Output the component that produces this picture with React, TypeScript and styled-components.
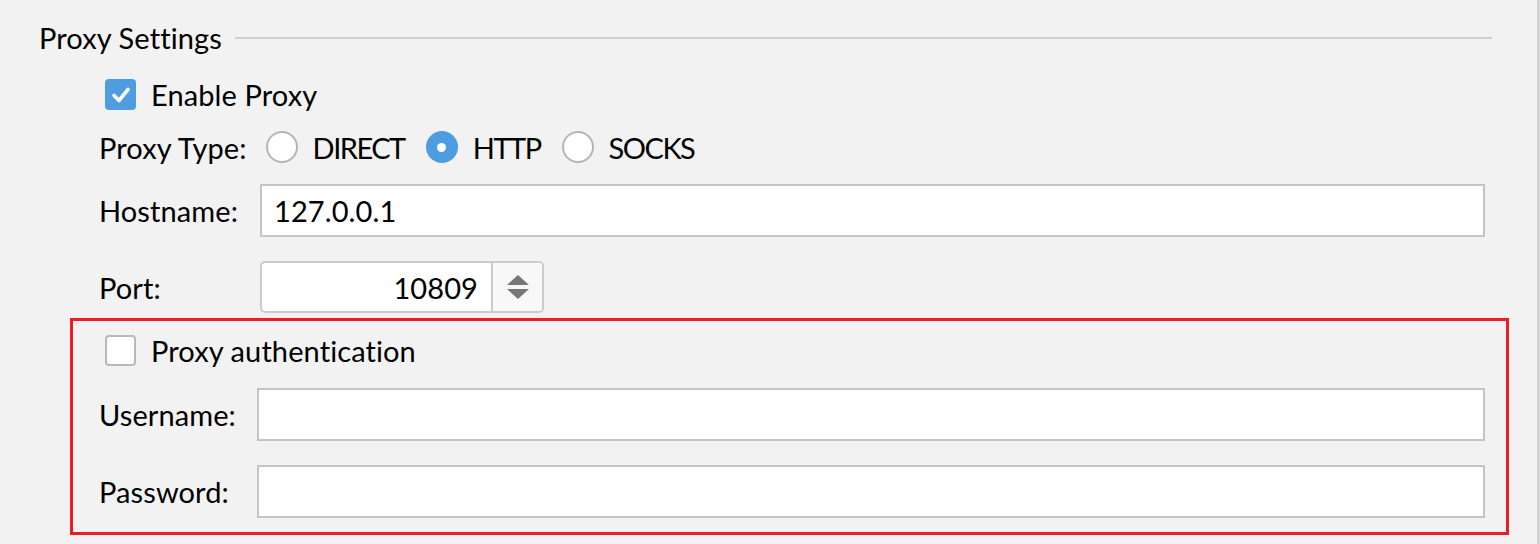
import React, { useState } from 'react';
import styled, { createGlobalStyle } from 'styled-components';

const GlobalStyle = createGlobalStyle`
    body {
        margin: 0;
        background: #f2f2f2;
        font-family: "Segoe UI", Lato, "Noto Sans", sans-serif;
        color: #000;
    }
`;

const Page = styled.div`
    width: 1540px;
    height: 544px;
    box-sizing: border-box;
    border-right: 3px solid #d4d4d4;
    overflow: hidden;
    font-size: 29px;
    letter-spacing: 0.1px;
`;

const GroupTitle = styled.div`
    display: flex;
    align-items: center;
    height: 40px;
    margin-top: 17px;
    padding-left: 39px;
    padding-right: 45px;
    .title {
        white-space: nowrap;
    }
    .rule {
        flex: 1;
        height: 2px;
        background: #d0d0d0;
        margin-left: 13px;
        margin-top: 1px;
    }
`;

const Body = styled.div`
    display: flex;
    flex-direction: column;
    padding-left: 99px;
    padding-right: 52px;
`;

const Row = styled.div<{ $top: number; $height: number }>`
    display: flex;
    align-items: center;
    height: ${p => p.$height}px;
    margin-top: ${p => p.$top}px;
`;

const CheckRow = styled(Row)`
    padding-left: 6px;
    cursor: pointer;
    user-select: none;
`;

const CheckBox = styled.span<{ $checked: boolean }>`
    width: 31px;
    height: 31px;
    box-sizing: border-box;
    border-radius: 4px;
    display: flex;
    align-items: center;
    justify-content: center;
    margin-right: 15px;
    background: ${p => (p.$checked ? '#4d9de0' : '#fff')};
    border: ${p => (p.$checked ? 'none' : '2px solid #b8b8b8')};
`;

const Label = styled.span<{ $width?: number }>`
    ${p => (p.$width ? `width: ${p.$width}px; flex-shrink: 0;` : '')}
    white-space: nowrap;
`;

const RadioGroup = styled.div`
    display: flex;
    align-items: center;
    margin-left: 19px;
    gap: 21px;
`;

const RadioItem = styled.label`
    display: flex;
    align-items: center;
    cursor: pointer;
    gap: 15px;
    span.text {
        letter-spacing: -1.5px;
    }
`;

const RadioDot = styled.span<{ $checked: boolean }>`
    width: 32px;
    height: 32px;
    box-sizing: border-box;
    border-radius: 50%;
    display: flex;
    align-items: center;
    justify-content: center;
    background: ${p => (p.$checked ? '#4d9de0' : '#fff')};
    border: ${p => (p.$checked ? 'none' : '2px solid #b5b5b5')};
    &::after {
        content: '';
        width: 9px;
        height: 9px;
        border-radius: 50%;
        background: #fff;
        display: ${p => (p.$checked ? 'block' : 'none')};
    }
`;

const TextInput = styled.input`
    flex: 1;
    height: 100%;
    box-sizing: border-box;
    border: 2px solid #c4c4c4;
    background: #fff;
    font: inherit;
    letter-spacing: inherit;
    padding: 0 12px;
    outline: none;
`;

const SpinBox = styled.div`
    display: flex;
    width: 284px;
    height: 100%;
    box-sizing: border-box;
    border: 2px solid #cbcbcb;
    border-radius: 5px;
    background: #fff;
    overflow: hidden;
    input {
        flex: 1;
        min-width: 0;
        border: none;
        outline: none;
        font: inherit;
        letter-spacing: inherit;
        text-align: right;
        padding: 0 13px 0 0;
        background: transparent;
    }
    .spin {
        width: 49px;
        border-left: 2px solid #cbcbcb;
        background: #f8f8f8;
        display: flex;
        flex-direction: column;
        align-items: center;
        justify-content: center;
        gap: 4px;
    }
`;

const AuthBox = styled.div`
    margin: 5px 28px 0 70px;
    border: 3px solid #ee1c25;
    padding: 0 21px 14px 26px;
    display: flex;
    flex-direction: column;
`;

const Check = () => (
    <svg width="20" height="18" viewBox="0 0 20 18">
        <path d="M3 9.5 L8 14.5 L17 3.5" fill="none" stroke="#fff" strokeWidth="3.6" strokeLinecap="round" strokeLinejoin="round" />
    </svg>
);

const App: React.FC = () => {
    const [enabled, setEnabled] = useState<boolean>(true);
    const [auth, setAuth] = useState<boolean>(false);
    const [proxyType, setProxyType] = useState<string>('HTTP');
    const [host, setHost] = useState<string>('127.0.0.1');
    const [port, setPort] = useState<number>(10809);

    return (
        <Page>
            <GlobalStyle />
            <GroupTitle>
                <span className='title'>Proxy Settings</span>
                <span className='rule' />
            </GroupTitle>
            <Body>
                <CheckRow $top={22} $height={31} onClick={() => setEnabled(!enabled)}>
                    <CheckBox $checked={enabled}>{enabled && <Check />}</CheckBox>
                    <Label>Enable Proxy</Label>
                </CheckRow>
                <Row $top={21} $height={32}>
                    <Label>Proxy Type:</Label>
                    <RadioGroup>
                        {['DIRECT', 'HTTP', 'SOCKS'].map(t => (
                            <RadioItem key={t} onClick={() => setProxyType(t)}>
                                <RadioDot $checked={proxyType === t} />
                                <span className='text'>{t}</span>
                            </RadioItem>
                        ))}
                    </RadioGroup>
                </Row>
                <Row $top={21} $height={53}>
                    <Label $width={161}>Hostname:</Label>
                    <TextInput value={host} onChange={e => setHost(e.target.value)} />
                </Row>
                <Row $top={24} $height={52}>
                    <Label $width={161}>Port:</Label>
                    <SpinBox>
                        <input value={port} onChange={e => setPort(Number(e.target.value) || 0)} />
                        <div className='spin'>
                            <svg width="22" height="10" viewBox="0 0 22 10" onClick={() => setPort(port + 1)}>
                                <polygon points="11,0 22,10 0,10" fill="#777" />
                            </svg>
                            <svg width="22" height="10" viewBox="0 0 22 10" onClick={() => setPort(port - 1)}>
                                <polygon points="0,0 22,0 11,10" fill="#777" />
                            </svg>
                        </div>
                    </SpinBox>
                </Row>
            </Body>
            <AuthBox>
                <CheckRow $top={14} $height={31} onClick={() => setAuth(!auth)}>
                    <CheckBox $checked={auth}>{auth && <Check />}</CheckBox>
                    <Label>Proxy authentication</Label>
                </CheckRow>
                <Row $top={22} $height={53}>
                    <Label $width={158}>Username:</Label>
                    <TextInput />
                </Row>
                <Row $top={24} $height={53}>
                    <Label $width={158}>Password:</Label>
                    <TextInput type='password' />
                </Row>
            </AuthBox>
        </Page>
    );
};

export default App;
